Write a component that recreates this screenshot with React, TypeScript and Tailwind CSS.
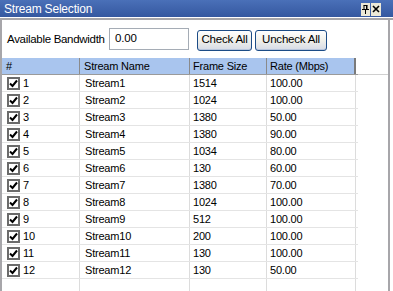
import React from 'react';

const rows = [
  ['1', 'Stream1', '1514', '100.00'],
  ['2', 'Stream2', '1024', '100.00'],
  ['3', 'Stream3', '1380', '50.00'],
  ['4', 'Stream4', '1380', '90.00'],
  ['5', 'Stream5', '1034', '80.00'],
  ['6', 'Stream6', '130', '60.00'],
  ['7', 'Stream7', '1380', '70.00'],
  ['8', 'Stream8', '1024', '100.00'],
  ['9', 'Stream9', '512', '100.00'],
  ['10', 'Stream10', '200', '100.00'],
  ['11', 'Stream11', '130', '100.00'],
  ['12', 'Stream12', '130', '50.00'],
];

const font = { fontFamily: 'Tahoma, "Liberation Sans", Arial, sans-serif' };

function Check() {
  return (
    <span className="w-[13px] h-[13px] border-2 border-[#6b6b6b] bg-white flex items-center justify-center shrink-0">
      <svg width="9" height="9" viewBox="0 0 9 9">
        <path d="M1 4.5 L3.5 7 L8 1.5" fill="none" stroke="#000" strokeWidth="2" />
      </svg>
    </span>
  );
}

function XpButton({ label, w }: { label: string; w: string }) {
  return (
    <button
      className={`${w} h-[21px] rounded-[3px] border border-[#1c4c86] bg-gradient-to-b from-[#ffffff] via-[#f0f0ea] to-[#d6dbe6] text-[11.5px] tracking-[-0.2px] text-black leading-none whitespace-nowrap shadow-[inset_0_-1px_0_#b8c6dd]`}
    >
      {label}
    </button>
  );
}

export default function App() {
  return (
    <div className="w-[393px] h-[291px] overflow-hidden bg-white text-black text-[11px] tracking-[-0.2px]" style={font}>
      <div className="h-[17px] flex items-center bg-gradient-to-b from-[#4a70b8] to-[#3558a0] pl-1 pr-[12px]">
        <span className="text-white text-[12px] leading-none tracking-[-0.2px]">Stream Selection</span>
        <div className="ml-auto flex gap-[1px] mt-[1px]">
          <span className="w-[9px] h-[13px] bg-[#ece9d8] flex items-center justify-center">
            <svg width="7" height="9" viewBox="0 0 7 9">
              <path d="M1.5 0.5 H5.5 M2 0.5 V4.5 M5 0.5 V4.5 M0 4.5 H7 M3.5 4.5 V9" stroke="#000" strokeWidth="1" fill="none" />
              <path d="M4.5 0.5 V4.5" stroke="#000" strokeWidth="1" />
            </svg>
          </span>
          <span className="w-[10px] h-[13px] bg-[#ece9d8] flex items-center justify-center">
            <svg width="8" height="8" viewBox="0 0 8 8">
              <path d="M1 1 L7 7 M7 1 L1 7" stroke="#000" strokeWidth="1.6" />
            </svg>
          </span>
        </div>
      </div>
      <div className="h-[1px] bg-white" />
      <div className="h-[2px] bg-[#a7a6aa]" />
      <div className="flex h-[273px]">
        <div className="w-[2px] bg-[#a7a6aa]" />
        <div className="flex-1 flex flex-col">
          <div className="h-[38px] flex items-center pl-[5px] pt-[2px]">
            <span className="w-[102px] whitespace-nowrap text-[11.5px] tracking-[-0.3px]">Available Bandwidth</span>
            <div className="w-[80px] h-[22px] border border-[#a5acb5] flex items-center pl-[5px] mb-[3px] text-[11.5px]">0.00</div>
            <div className="ml-[8px] flex gap-[3px]">
              <XpButton label="Check All" w="w-[55px]" />
              <XpButton label="Uncheck All" w="w-[72px]" />
            </div>
          </div>
          <div className="flex flex-1">
            <div className="w-[356px] flex flex-col">
              <div className="flex h-[17px] border-b border-[#9a9a9a]">
                <div className="w-[78px] bg-[#a9c5ee] border-r border-[#8a8a8a] pl-[4px] flex items-center">#</div>
                <div className="w-[110px] bg-[#a9c5ee] border-r border-[#8a8a8a] pl-[4px] flex items-center">Stream Name</div>
                <div className="w-[77px] bg-[#a9c5ee] border-r border-[#8a8a8a] pl-[3px] flex items-center">Frame Size</div>
                <div className="w-[89px] bg-[#a9c5ee] border-r-2 border-[#7a7a7a] pl-[3px] flex items-center">Rate (Mbps)</div>
              </div>
              {rows.map(r => (
                <div key={r[0]} className="flex h-[17px] border-b border-[#e4e4e4]">
                  <div className="w-[78px] border-r border-[#dcdcdc] pl-[5px] flex items-center gap-[3px]">
                    <Check />
                    <span>{r[0]}</span>
                  </div>
                  <div className="w-[110px] border-r border-[#dcdcdc] pl-[5px] flex items-center">{r[1]}</div>
                  <div className="w-[77px] border-r border-[#dcdcdc] pl-[3px] flex items-center">{r[2]}</div>
                  <div className="w-[89px] border-r border-[#dcdcdc] pl-[3px] flex items-center">{r[3]}</div>
                </div>
              ))}
              <div className="flex flex-1">
                <div className="w-[78px] border-r border-[#dcdcdc]" />
                <div className="w-[110px] border-r border-[#dcdcdc]" />
                <div className="w-[77px] border-r border-[#dcdcdc]" />
                <div className="w-[89px] border-r border-[#dcdcdc]" />
              </div>
            </div>
            <div className="flex-1 flex flex-col">
              <div className="h-[17px] border-b border-[#d0d0d0]" />
            </div>
          </div>
        </div>
        <div className="w-[2px] bg-[#a7a6aa]" />
        <div className="w-[3px] bg-white" />
      </div>
    </div>
  );
}
